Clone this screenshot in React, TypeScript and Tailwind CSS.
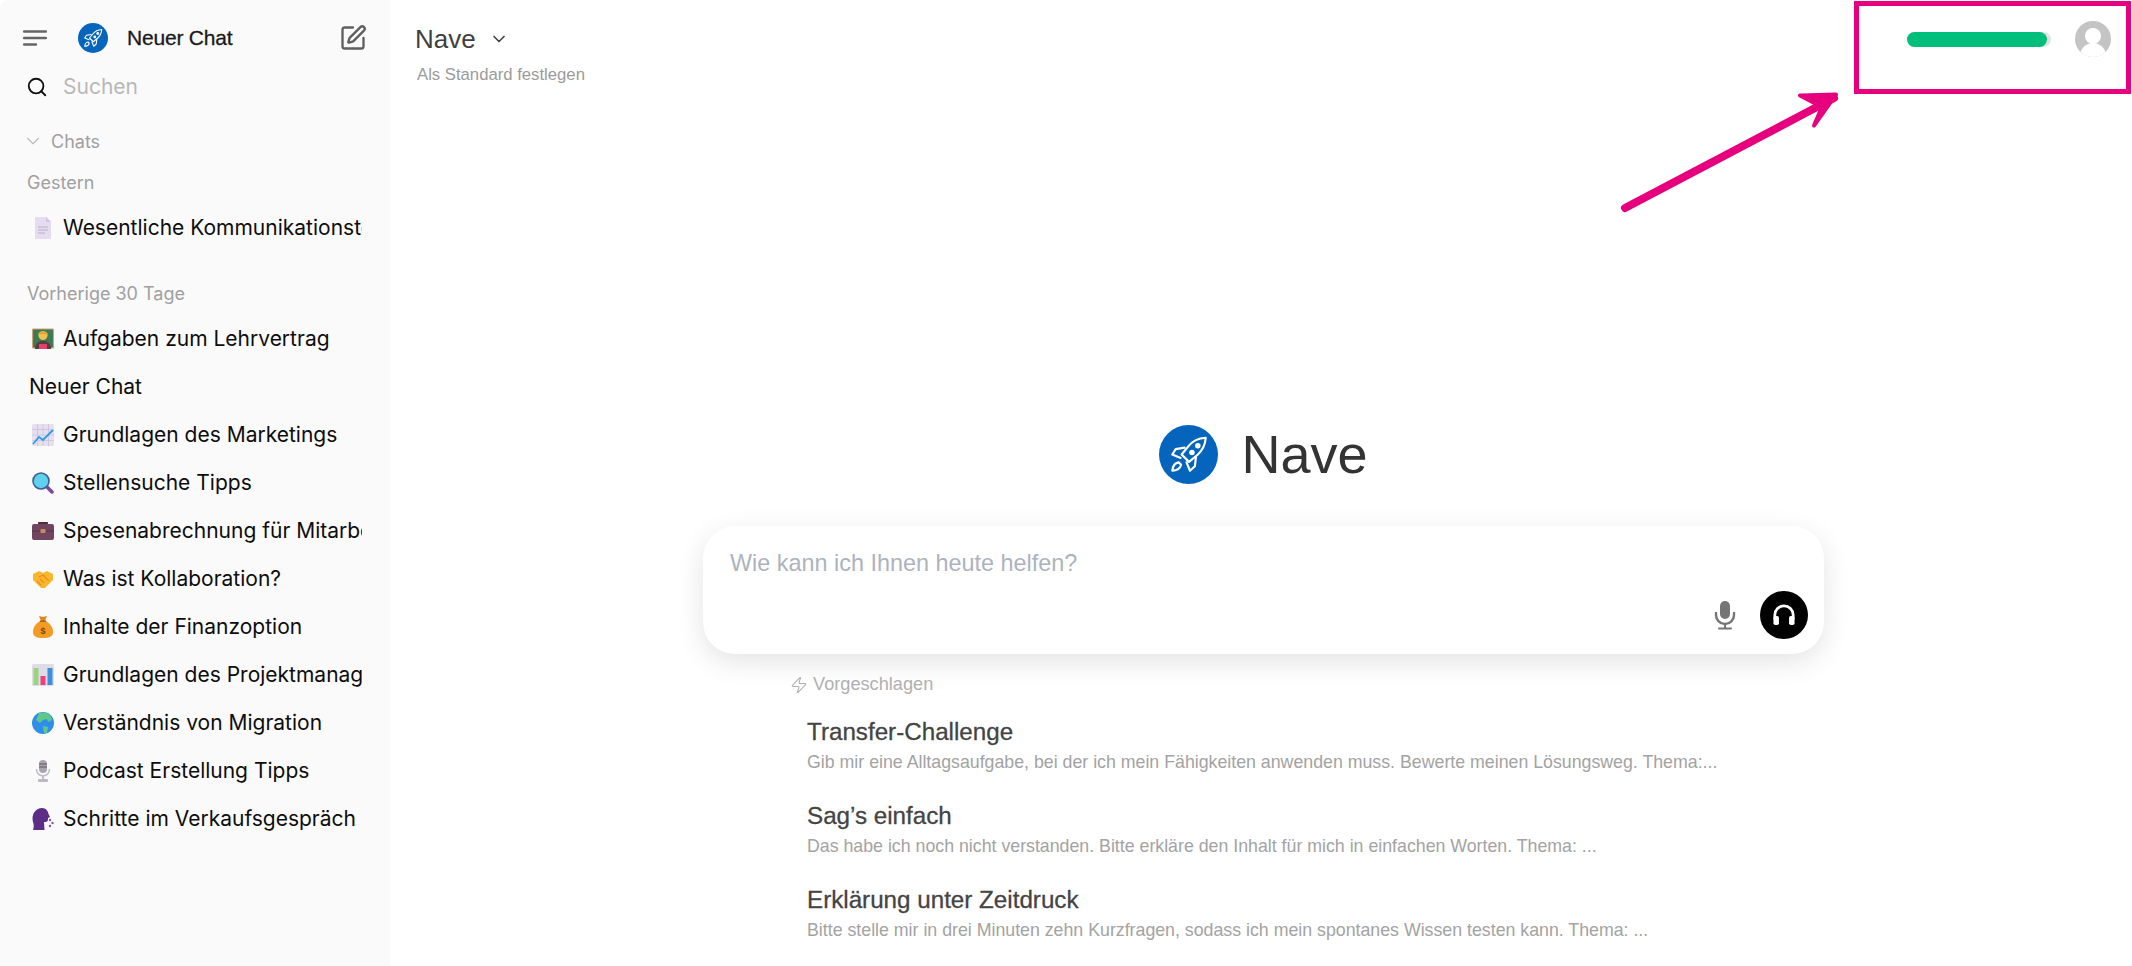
import { Search, ChevronDown, SquarePen, Zap } from "lucide-react";
import type { ReactNode } from "react";

function RocketLogo({ size }: { size: number }) {
  return (
    <svg width={size} height={size} viewBox="0 0 60 60" className="shrink-0">
      <circle cx="30" cy="30" r="30" fill="#0565bd" />
      <g fill="none" stroke="#fff" strokeWidth="2.2" strokeLinejoin="round" strokeLinecap="round">
        <path d="M47.500 13c-7 .5-13.500 3.500-17.500 8.500l-7 8.500 7.500 7.500 8.500-7c4.500-4 8-10 8.500-17.500z" />
        <path d="M26 23l-9 1.500-3.500 5.500 8.500 3.500" />
        <path d="M37.500 33l-1 9-5 4.500-3.500-8.500" />
        <path d="M20 38c-3.500.5-6 3.500-6.500 8.500 5 0 8-2.500 9-6z" />
      </g>
      <circle cx="33.500" cy="28" r="2.800" fill="#fff" />
      <circle cx="39.500" cy="21" r="2.800" fill="#fff" />
    </svg>
  );
}

function Emoji({ children }: { children: ReactNode }) {
  return (
    <svg width="22" height="22" viewBox="0 0 22 22" className="shrink-0">
      {children}
    </svg>
  );
}

const emojis: Record<string, ReactNode> = {
  doc: (
    <>
      <path d="M3 0h11l5 5v17H3z" fill="#e6dcf2" />
      <path d="M14 0l5 5h-5z" fill="#d2c4e4" />
      <path d="M6 10h10M6 13h10M6 16h7" stroke="#b9b0c4" strokeWidth="1" />
    </>
  ),
  teacher: (
    <>
      <rect x="0.500" y="1" width="21" height="19" rx="1" fill="#3a7a55" stroke="#d0a074" strokeWidth="1.200" />
      <path d="M3 21c0-5 3-8 8-8s8 3 8 8z" fill="#5a3a3c" />
      <rect x="7" y="16" width="8" height="5" fill="#e83e6b" />
      <circle cx="11" cy="7.500" r="4.500" fill="#f5c14e" />
      <path d="M6 7c.5-5 9.500-5 10 0-3-1.500-7-1.500-10 0z" fill="#e8a33a" />
    </>
  ),
  chart: (
    <>
      <rect x="0" y="0" width="22" height="22" rx="1.500" fill="#e6dff0" />
      <path d="M0 5.500h22M0 11h22M0 16.500h22M5.500 0v22M11 0v22M16.500 0v22" stroke="#cbc2da" strokeWidth=".8" />
      <path d="M1 20l6-7 4 3 10-10" fill="none" stroke="#2f9be8" strokeWidth="1.800" />
    </>
  ),
  search: (
    <>
      <path d="M14 14l6 6" stroke="#7d4a98" strokeWidth="3.500" strokeLinecap="round" />
      <circle cx="9" cy="9" r="8" fill="#5fd0ee" stroke="#3d5f8f" strokeWidth="1.600" />
    </>
  ),
  briefcase: (
    <>
      <path d="M7 5V3h8v2" fill="none" stroke="#4a2f3d" strokeWidth="1.800" />
      <rect x="0" y="4" width="22" height="16" rx="2" fill="#6f4560" />
      <path d="M0 11h22" stroke="#5a3550" strokeWidth="1" />
      <rect x="8.500" y="9" width="5" height="4" rx=".8" fill="#c98a5c" />
    </>
  ),
  handshake: (
    <>
      <path d="M1 6l6-3 4 2 4-2 6 3v6l-8 8h-4l-8-8z" fill="#fbb62d" />
      <path d="M7 9l4-2 6 6M5 13l4 4M8 11l4 4" fill="none" stroke="#e88f1b" strokeWidth="1.100" />
    </>
  ),
  money: (
    <>
      <path d="M8 5C3 8 1 12 1 16c0 4 3 6 10 6s10-2 10-6c0-4-2-8-7-11z" fill="#f49b26" />
      <path d="M7 0c2 1 6 1 8 0l-2 5H9z" fill="#e0851c" />
      <rect x="8" y="4.500" width="6" height="1.500" fill="#a8601a" />
      <text x="11" y="18" textAnchor="middle" fontSize="9" fontFamily="Liberation Sans" fontWeight="700" fill="#7a4510">$</text>
    </>
  ),
  bars: (
    <>
      <rect x="0" y="0" width="22" height="22" rx="1.500" fill="#dfdce8" />
      <rect x="1.500" y="4" width="5" height="17" fill="#9ad47c" />
      <rect x="8.500" y="12" width="5" height="9" fill="#ef3f7c" />
      <rect x="15.500" y="4" width="5" height="17" fill="#3d8fdc" />
    </>
  ),
  globe: (
    <>
      <circle cx="11" cy="11" r="11" fill="#2f8ee8" />
      <path d="M7 1c3-1 8-1 11 2l2 5-4 2-1-3-4 1-3 3-4-3zM11 14l5 1-1 6-3 0z" fill="#5fc98c" />
    </>
  ),
  mic: (
    <>
      <rect x="7" y="0" width="8" height="13" rx="4" fill="#a9a4b0" />
      <path d="M7 4h8M7 7h8" stroke="#5b5663" strokeWidth="1.200" />
      <path d="M4.500 9c0 9 13 9 13 0" fill="none" stroke="#c2bdc9" strokeWidth="1.600" />
      <rect x="10" y="15" width="2" height="4" fill="#c2bdc9" />
      <rect x="6" y="19" width="10" height="3" rx="1" fill="#bdb8c4" />
    </>
  ),
  speak: (
    <>
      <path d="M1 22c1-3 1-5 0-8C-1 6 4 0 10 0c4 0 6 3 6.500 6l1.500 3-2 1c0 3-.5 4-3 4h-1l.5 8z" fill="#5b2d86" />
      <circle cx="18" cy="12" r="1.200" fill="#7a5ba0" />
      <circle cx="20.500" cy="15" r="1.200" fill="#7a5ba0" />
      <circle cx="18" cy="18" r="1.200" fill="#7a5ba0" />
    </>
  ),
};

const older: { icon?: string; label: string }[] = [
  { icon: "teacher", label: "Aufgaben zum Lehrvertrag" },
  { label: "Neuer Chat" },
  { icon: "chart", label: "Grundlagen des Marketings" },
  { icon: "search", label: "Stellensuche Tipps" },
  { icon: "briefcase", label: "Spesenabrechnung für Mitarbeiter" },
  { icon: "handshake", label: "Was ist Kollaboration?" },
  { icon: "money", label: "Inhalte der Finanzoption" },
  { icon: "bars", label: "Grundlagen des Projektmanagements" },
  { icon: "globe", label: "Verständnis von Migration" },
  { icon: "mic", label: "Podcast Erstellung Tipps" },
  { icon: "speak", label: "Schritte im Verkaufsgespräch" },
];

const suggestions = [
  {
    title: "Transfer-Challenge",
    text: "Gib mir eine Alltagsaufgabe, bei der ich mein Fähigkeiten anwenden muss. Bewerte meinen Lösungsweg. Thema:...",
  },
  {
    title: "Sag’s einfach",
    text: "Das habe ich noch nicht verstanden. Bitte erkläre den Inhalt für mich in einfachen Worten. Thema: ...",
  },
  {
    title: "Erklärung unter Zeitdruck",
    text: "Bitte stelle mir in drei Minuten zehn Kurzfragen, sodass ich mein spontanes Wissen testen kann. Thema: ...",
  },
];

function ChatRow({ icon, label }: { icon?: string; label: string }) {
  return (
    <div className={`flex h-12 w-[362px] items-center overflow-hidden whitespace-nowrap text-[21px] text-[#0d0d0d] ${icon ? "pl-[32px]" : "pl-[29px]"}`}>
      {icon && <Emoji>{emojis[icon]}</Emoji>}
      <span className={icon ? "ml-[9px]" : ""}>{label}</span>
    </div>
  );
}

function Sidebar() {
  return (
    <aside className="h-full w-[390px] shrink-0 rounded-tl-lg bg-[#fafafa] font-['Inter',sans-serif]">
      <div className="flex h-[75px] items-center pl-[23px] pr-[23px]">
        <svg width="24" height="16" viewBox="0 0 24 16" className="shrink-0">
          <path d="M1 1.500h22M1 8h22M1 14.500h12" stroke="#666" strokeWidth="2.400" strokeLinecap="round" />
        </svg>
        <div className="ml-[31px]"><RocketLogo size={30} /></div>
        <span className="ml-[19px] font-['Liberation_Sans',sans-serif] text-[21px] tracking-[-0.2px] text-[#1a1a1a] [-webkit-text-stroke:0.3px_#1a1a1a]">Neuer Chat</span>
        <SquarePen className="ml-auto text-[#5f5f5f]" size={28} strokeWidth={2} />
      </div>
      <div className="-mt-px flex h-[26px] items-center pl-[26px]">
        <Search size={22} strokeWidth={2} className="text-[#111]" />
        <span className="ml-[15px] text-[21px] text-[#b8b8b8]">Suchen</span>
      </div>
      <div className="mt-[29px] flex h-[24px] items-center pl-[22px]">
        <ChevronDown size={22} strokeWidth={1.200} className="text-[#bbb]" />
        <span className="ml-[7px] text-[18px] text-[#a0a0a0]">Chats</span>
      </div>
      <div className="mt-[18px] h-[24px] pl-[27px] text-[18px] leading-[24px] text-[#a0a0a0]">Gestern</div>
      <div className="mt-[9px]"><ChatRow icon="doc" label="Wesentliche Kommunikationstechniken" /></div>
      <div className="mt-[30px] h-[24px] pl-[27px] text-[18px] leading-[24px] text-[#a0a0a0]">Vorherige 30 Tage</div>
      <div className="mt-[9px]">
        {older.map((item) => (
          <ChatRow key={item.label} {...item} />
        ))}
      </div>
    </aside>
  );
}

function Main() {
  return (
    <main className="flex h-full min-w-0 flex-1 flex-col font-['Liberation_Sans',sans-serif]">
      <div className="pl-[25px] pt-[23px]">
        <div className="flex h-[32px] items-center">
          <span className="text-[26px] text-[#3f3f3f]">Nave</span>
          <ChevronDown size={20} strokeWidth={2} className="ml-[13px] text-[#444]" />
        </div>
        <div className="ml-[2px] mt-[9px] text-[16.7px] leading-[22px] text-[#9b9b9b]">Als Standard festlegen</div>
      </div>

      <div className="mt-[336px] flex items-center justify-center gap-[23px] pl-[5px]">
        <RocketLogo size={59} />
        <span className="text-[54px] leading-[64px] text-[#333]">Nave</span>
      </div>

      <div className="ml-[313px] mt-[40px] h-[128px] w-[1121px] rounded-[32px] bg-white pl-[27px] pr-[16px] pt-[21px] shadow-[0_8px_28px_rgba(0,0,0,0.11)]">
        <div className="text-[23.4px] leading-[32px] text-[#adb3bd]">Wie kann ich Ihnen heute helfen?</div>
        <div className="mt-[12px] flex items-center justify-end gap-[23px]">
          <svg width="24" height="30" viewBox="0 0 24 30">
            <rect x="7" y="1" width="10" height="18" rx="5" fill="#757575" />
            <path d="M3 13v2a9 9 0 0 0 18 0v-2" fill="none" stroke="#757575" strokeWidth="2.400" strokeLinecap="round" />
            <path d="M12 24v4M6 28.500h12" stroke="#757575" strokeWidth="2" strokeLinecap="round" />
          </svg>
          <div className="flex h-12 w-12 items-center justify-center rounded-full bg-black">
            <svg width="24" height="22" viewBox="0 0 26 24">
              <path d="M3 17v-5a10 10 0 0 1 20 0v5" fill="none" stroke="#fff" strokeWidth="3" />
              <rect x="1.500" y="13" width="6" height="10" rx="2" fill="#fff" />
              <rect x="18.500" y="13" width="6" height="10" rx="2" fill="#fff" />
            </svg>
          </div>
        </div>
      </div>

      <div className="ml-[400px] mt-[19px] flex h-[24px] items-center gap-[5px] text-[18.2px] text-[#b0b0b0]">
        <Zap size={18} strokeWidth={1.400} className="text-[#b0b0b0]" />
        Vorgeschlagen
      </div>

      <div className="ml-[417px] mt-[17px] flex flex-col gap-[24px]">
        {suggestions.map((s) => (
          <div key={s.title} className="h-[60px] whitespace-nowrap">
            <div className="text-[24.2px] leading-[36px] text-[#444] [-webkit-text-stroke:0.3px_#444]">{s.title}</div>
            <div className="text-[17.75px] leading-[24px] text-[#a3a3a3]">{s.text}</div>
          </div>
        ))}
      </div>
    </main>
  );
}

function Annotation() {
  return (
    <>
      <div className="absolute left-[1854px] top-[1px] h-[93px] w-[277px] border-[5px] border-[#e6007e]" />
      <svg className="absolute left-[1610px] top-[83px]" width="240" height="135" viewBox="0 0 240 135">
        <path d="M15 125L224 15" fill="none" stroke="#e6007e" strokeWidth="8" strokeLinecap="round" />
        <path d="M190 12.500L226 11.500L204 42.500L212 24z" fill="#e6007e" stroke="#e6007e" strokeWidth="4" strokeLinejoin="round" />
      </svg>
    </>
  );
}

function UsageBadge() {
  return (
    <div className="absolute right-[21px] top-[21px] flex items-center gap-[24px]">
      <div className="h-[15px] w-[144px] rounded-full bg-[#e2e2e2]">
        <div className="h-full w-[140px] rounded-full bg-[#00bf7d]" />
      </div>
      <svg width="36" height="36" viewBox="0 0 36 36">
        <defs>
          <clipPath id="avatar"><circle cx="18" cy="18" r="18" /></clipPath>
        </defs>
        <circle cx="18" cy="18" r="18" fill="#c4c4c4" />
        <g clipPath="url(#avatar)" fill="#fff">
          <circle cx="18" cy="15" r="8" />
          <ellipse cx="18" cy="35" rx="13" ry="13" />
        </g>
      </svg>
    </div>
  );
}

export default function App() {
  return (
    <div className="relative flex h-[966px] w-[2132px] overflow-hidden bg-white">
      <Sidebar />
      <Main />
      <UsageBadge />
      <Annotation />
    </div>
  );
}
